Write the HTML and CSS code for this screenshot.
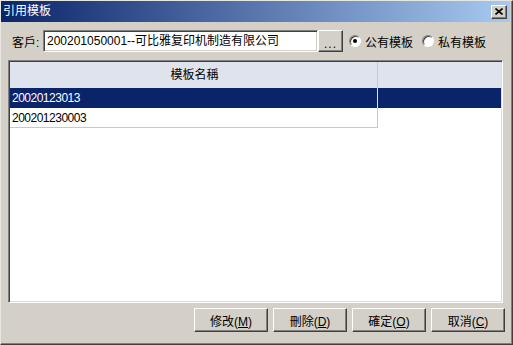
FILE: index.html
```html
<!DOCTYPE html>
<html lang="zh">
<head>
    <meta charset="UTF-8">
    <title>引用模板</title>
    <link rel="stylesheet" href="styles.css">
</head>
<body>
    <div class="window">
        <div class="titlebar">
            <span class="title">引用模板</span>
            <span class="close">
                <svg width="8" height="7" viewBox="0 0 8 7"><path d="M0.5 0.5 L7.5 6.5 M7.5 0.5 L0.5 6.5" stroke="#000" stroke-width="1.6" fill="none"/></svg>
            </span>
        </div>

        <div class="toolbar">
            <span class="cust-label">客戶:</span>
            <div class="textbox">200201050001--可比雅复印机制造有限公司</div>
            <button class="btn browse">...</button>
            <label class="radio"><span class="radio-dot checked"></span>公有模板</label>
            <label class="radio"><span class="radio-dot"></span>私有模板</label>
        </div>

        <div class="grid">
            <div class="grid-row header">
                <div class="cell name">模板名稱</div>
                <div class="cell rest"></div>
            </div>
            <div class="grid-row selected">
                <div class="cell name code">20020123013</div>
                <div class="cell rest"></div>
            </div>
            <div class="grid-row">
                <div class="cell name code">200201230003</div>
            </div>
        </div>

        <div class="buttons">
            <button class="btn action">修改(<u>M</u>)</button>
            <button class="btn action">刪除(<u>D</u>)</button>
            <button class="btn action">確定(<u>O</u>)</button>
            <button class="btn action">取消(<u>C</u>)</button>
        </div>
    </div>
</body>
</html>
```

FILE: styles.css
```css
body {
    margin: 0;
    background: #d4d0c8;
    font-family: "Liberation Sans", "Noto Sans CJK SC", sans-serif;
    font-size: 12px;
    color: #000;
}
.window {
    width: 513px;
    height: 345px;
    box-sizing: border-box;
    border: 1px solid;
    border-color: #e8e6e0 #404040 #404040 #e8e6e0;
    box-shadow: inset -1px -1px #808080;
    background: #d4d0c8;
    display: flex;
    flex-direction: column;
}
.titlebar {
    height: 21px;
    margin-right: 2px;
    background: linear-gradient(to right, #0a246a, #a6caf0);
    display: flex;
    align-items: center;
    justify-content: space-between;
    padding: 0 3px 0 2px;
}
.title {
    color: #fff;
    font-size: 12px;
    line-height: 21px;
}
.close {
    width: 16px;
    height: 14px;
    box-sizing: border-box;
    background: #d4d0c8;
    border: 1px solid;
    border-color: #fff #404040 #404040 #fff;
    box-shadow: inset -1px -1px #808080;
    display: flex;
    align-items: center;
    justify-content: center;
}
.toolbar {
    display: flex;
    align-items: center;
    height: 22px;
    margin-top: 8px;
    padding-left: 11px;
}
.cust-label {
    width: 31px;
    white-space: nowrap;
}
.textbox {
    width: 275px;
    height: 22px;
    box-sizing: border-box;
    background: #fff;
    border: 1px solid;
    border-color: #808080 #fff #fff #808080;
    box-shadow: inset 1px 1px #404040, inset -1px -1px #d4d0c8;
    padding: 1px 0 0 3px;
    line-height: 18px;
    white-space: nowrap;
    overflow: hidden;
}
.btn {
    background: #d4d0c8;
    border: 1px solid;
    border-color: #fff #404040 #404040 #fff;
    box-shadow: inset -1px -1px #808080;
    font-family: inherit;
    font-size: 12px;
    color: #000;
    padding: 0;
    box-sizing: border-box;
}
.browse {
    width: 25px;
    height: 22px;
    line-height: 26px;
    letter-spacing: 1px;
}
.radio {
    display: flex;
    align-items: center;
    margin-left: 6px;
    white-space: nowrap;
}
.radio + .radio {
    margin-left: 9px;
}
.radio-dot {
    width: 12px;
    height: 12px;
    box-sizing: border-box;
    border-radius: 50%;
    background: #fff;
    border: 1px solid;
    border-color: #808080 #fff #fff #808080;
    box-shadow: inset 1px 1px #404040;
    margin-right: 4px;
    position: relative;
}
.radio-dot.checked::after {
    content: "";
    position: absolute;
    left: 3px;
    top: 3px;
    width: 4px;
    height: 4px;
    border-radius: 50%;
    background: #000;
}
.grid {
    margin: 8px 0 0 7px;
    width: 495px;
    height: 243px;
    box-sizing: border-box;
    background: #fff;
    border: 1px solid;
    border-color: #808080 #fff #fff #808080;
    box-shadow: inset 1px 1px #404040, inset -1px -1px #d8dbe8;
    padding: 1px 1px 1px 1px;
}
.grid-row {
    display: flex;
    height: 20px;
}
.cell {
    box-sizing: border-box;
    line-height: 20px;
    white-space: nowrap;
}
.name {
    width: 368px;
    padding-left: 2px;
    border-right: 1px solid #c8c8c8;
    border-bottom: 1px solid #c8c8c8;
}
.code {
    letter-spacing: -0.5px;
}
.rest {
    flex: 1;
}
.header {
    height: 26px;
    background: #dfe3ee;
}
.header .cell {
    line-height: 26px;
    border-bottom: none;
}
.header .name {
    text-align: center;
}
.selected {
    background: #0a246a;
    color: #fff;
}
.selected .name {
    border-right-color: #dfe3ee;
    border-bottom: none;
}
.buttons {
    display: flex;
    justify-content: flex-end;
    gap: 5px;
    margin-top: 5px;
    padding-right: 7px;
}
.action {
    width: 74px;
    height: 24px;
}
.action u {
    text-underline-offset: 1px;
}
```
